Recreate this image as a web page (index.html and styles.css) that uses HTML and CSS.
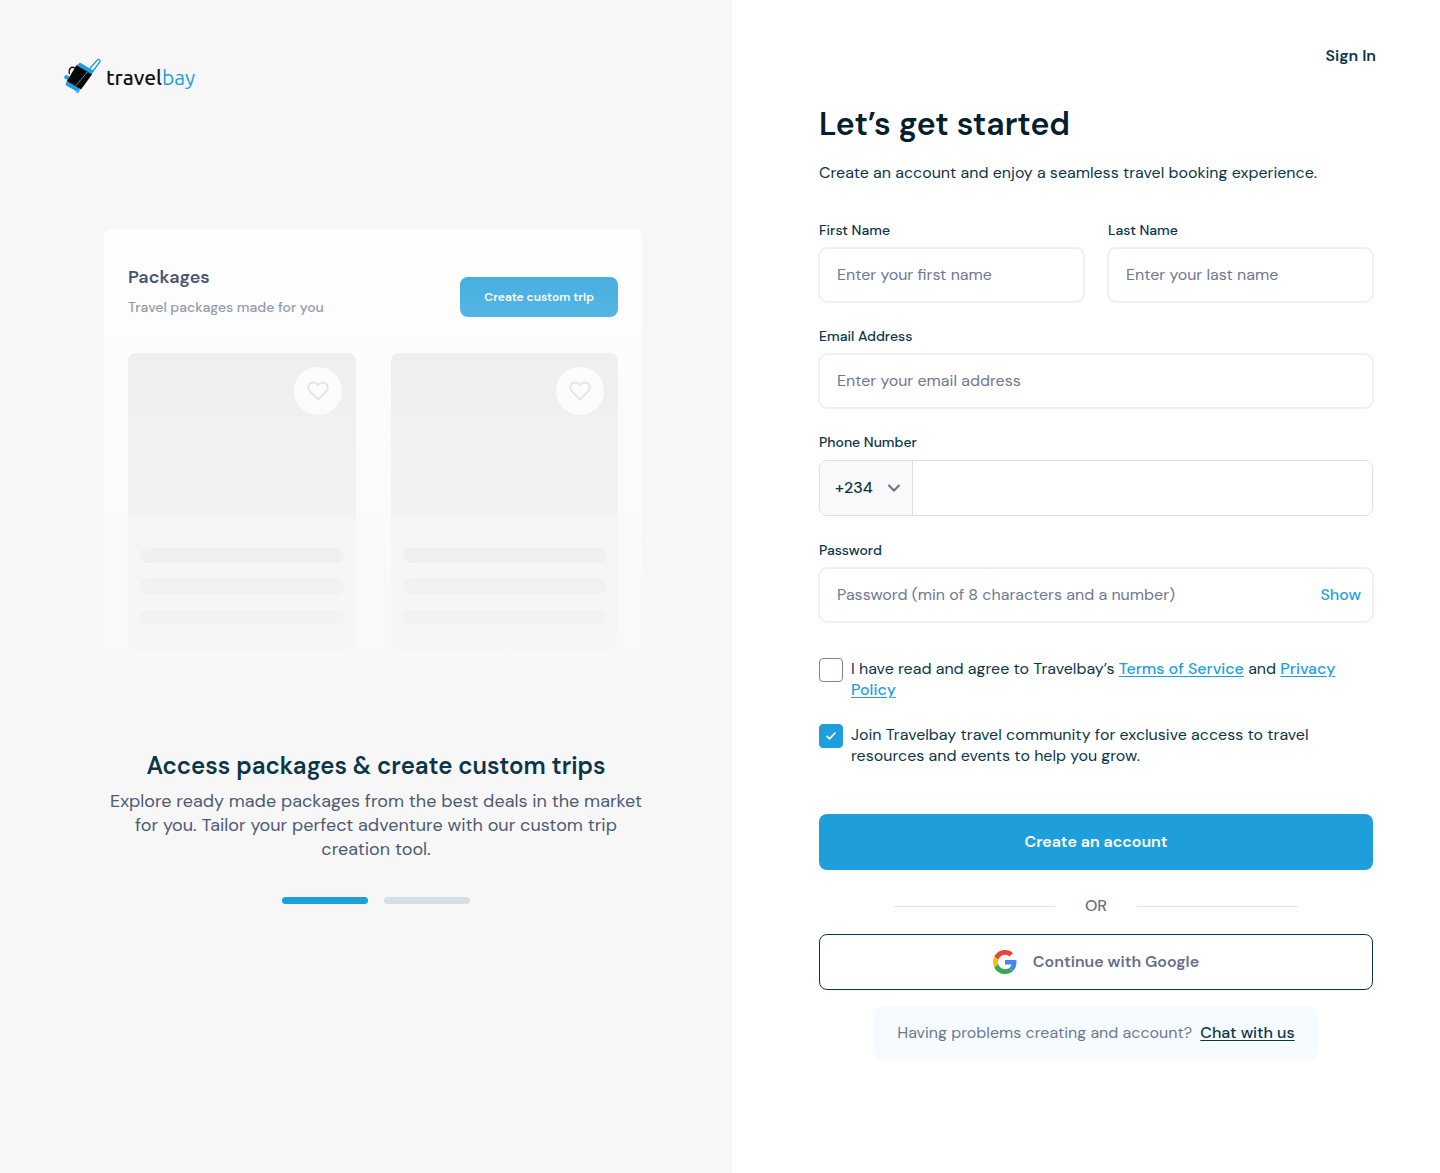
FILE: index.html
```html
<!DOCTYPE html>
<html lang="en">
<head>
<meta charset="utf-8">
<meta name="viewport" content="width=device-width, initial-scale=1">
<title>Travelbay – Create an account</title>
<link rel="stylesheet" href="styles.css">
</head>
<body>
<div class="page">
  <section class="promo">
    <a class="logo" href="#" aria-label="travelbay">
      <svg class="logo-mark" viewBox="0 0 38 36" aria-hidden="true">
        <path d="M24.500 12 L33.500 1.800 Q34.500 .9 35.700 1.900 Q36.600 2.800 35.700 4 L28 14.500" fill="none" stroke="#1e9fdc" stroke-width="1.300"/>
        <path d="M5.500 16 Q4.500 12 6.500 10 Q8.500 8.500 11 10" fill="none" stroke="#111" stroke-width="1.300"/>
        <path d="M13 7 L16 4.500 L30 13 L27.500 17 Z" fill="#1e9fdc"/>
        <path d="M3 22 L15.500 30 L15.500 33 Q14.500 35.500 12.500 34.800 L11 32.500 L1.500 27 Z" fill="#1e9fdc"/>
        <path d="M0 18.800 L2 16.800 L5.500 18.500 L4 22 L.8 20.800 Z" fill="#1e9fdc"/>
        <path d="M12.500 7 L28 16.500 L17 31.500 L3 23 Z" fill="#05070a"/>
        <path d="M23.500 13.800 L11.500 28.200" stroke="#b9c3c9" stroke-width=".8" stroke-dasharray="3 .6"/>
        <circle cx="13" cy="33.200" r=".7" fill="#f7f7f7"/>
      </svg>
      <span class="logo-text">travel<span class="logo-accent">bay</span></span>
    </a>

    <div class="promo-body">
      <div class="preview">
        <div class="preview-head">
          <div>
            <h3 class="preview-title">Packages</h3>
            <p class="preview-sub">Travel packages made for you</p>
          </div>
          <button class="preview-btn" type="button">Create custom trip</button>
        </div>
        <div class="preview-grid">
          <div class="package">
            <div class="package-image">
              <span class="package-like"><svg viewBox="0 0 24 24" aria-hidden="true"><path d="M12 20.500 L3.800 12.300 C1.600 10 1.700 6.600 3.800 4.800 C6.200 2.800 9.800 3.200 12 6 C14.200 3.200 17.800 2.800 20.200 4.800 C22.300 6.600 22.400 10 20.200 12.300 Z"/></svg></span>
            </div>
            <div class="package-lines"><span></span><span></span><span></span></div>
          </div>
          <div class="package">
            <div class="package-image">
              <span class="package-like"><svg viewBox="0 0 24 24" aria-hidden="true"><path d="M12 20.500 L3.800 12.300 C1.600 10 1.700 6.600 3.800 4.800 C6.200 2.800 9.800 3.200 12 6 C14.200 3.200 17.800 2.800 20.200 4.800 C22.300 6.600 22.400 10 20.200 12.300 Z"/></svg></span>
            </div>
            <div class="package-lines"><span></span><span></span><span></span></div>
          </div>
        </div>
      </div>

      <h2 class="promo-title">Access packages &amp; create custom trips</h2>
      <p class="promo-text">Explore ready made packages from the best deals in the market for you. Tailor your perfect adventure with our custom trip creation tool.</p>
      <div class="slides"><span class="slide slide-active"></span><span class="slide"></span></div>
    </div>
  </section>

  <main class="signup">
    <nav class="top"><a class="signin" href="#">Sign In</a></nav>
    <form class="form">
      <h1 class="title">Let’s get started</h1>
      <p class="subtitle">Create an account and enjoy a seamless travel booking experience.</p>

      <div class="fields">
        <div class="names">
          <div class="field">
            <label for="first">First Name</label>
            <input class="input" id="first" type="text" placeholder="Enter your first name">
          </div>
          <div class="field">
            <label for="last">Last Name</label>
            <input class="input" id="last" type="text" placeholder="Enter your last name">
          </div>
        </div>
        <div class="field">
          <label for="email">Email Address</label>
          <input class="input" id="email" type="email" placeholder="Enter your email address">
        </div>
        <div class="field">
          <label for="phone">Phone Number</label>
          <div class="phone">
            <div class="code">
              <select class="code-select" aria-label="Country code"><option>+234</option></select>
              <svg class="chevron" viewBox="0 0 14 8" aria-hidden="true"><path d="M1.500 1 L7 6.500 L12.500 1"/></svg>
            </div>
            <input class="phone-input" id="phone" type="tel">
          </div>
        </div>
        <div class="field">
          <label for="password">Password</label>
          <div class="input password">
            <input class="password-input" id="password" type="password" placeholder="Password (min of 8 characters and a number)">
            <button class="show" type="button">Show</button>
          </div>
        </div>
      </div>

      <div class="checks">
        <div class="check">
          <input class="box" id="terms" type="checkbox">
          <label for="terms">I have read and agree to Travelbay’s <a href="#">Terms of Service</a> and <a href="#">Privacy Policy</a></label>
        </div>
        <div class="check">
          <input class="box" id="join" type="checkbox" checked>
          <label for="join">Join Travelbay travel community for exclusive access to travel resources and events to help you grow.</label>
        </div>
      </div>

      <button class="btn btn-primary" type="submit">Create an account</button>
      <div class="or"><span>OR</span></div>
      <button class="btn btn-google" type="button">
        <svg class="google" viewBox="0 0 48 48" aria-hidden="true">
          <path fill="#ea4335" d="M24 9.500c3.540 0 6.710 1.220 9.210 3.600l6.850-6.850C35.900 2.380 30.470 0 24 0 14.620 0 6.510 5.380 2.560 13.220l7.980 6.190C12.430 13.720 17.740 9.500 24 9.500z"/>
          <path fill="#4285f4" d="M46.980 24.550c0-1.570-.15-3.090-.38-4.550H24v9.020h12.940c-.58 2.960-2.260 5.480-4.780 7.180l7.730 6c4.510-4.180 7.090-10.360 7.090-17.650z"/>
          <path fill="#fbbc05" d="M10.530 28.590c-.48-1.450-.76-2.990-.76-4.590s.27-3.140.76-4.590l-7.980-6.190C.92 16.460 0 20.120 0 24c0 3.880.92 7.540 2.560 10.780l7.970-6.190z"/>
          <path fill="#34a853" d="M24 48c6.480 0 11.930-2.130 15.890-5.810l-7.730-6c-2.150 1.450-4.920 2.300-8.160 2.300-6.260 0-11.570-4.220-13.470-9.910l-7.980 6.190C6.510 42.620 14.620 48 24 48z"/>
        </svg>
        Continue with Google
      </button>
      <p class="help">Having problems creating and account? <a href="#">Chat with us</a></p>
    </form>
  </main>
</div>
</body>
</html>
```
FILE: styles.css
```css
* { box-sizing: border-box; }

body {
  margin: 0;
  background: #fff;
  color: #0b3649;
  font-family: "DM Sans", Inter, "Liberation Sans", sans-serif;
  font-size: 16px;
  line-height: 24px;
}

h1, h2, h3, p { margin: 0; }
button, input, select { font: inherit; color: inherit; }
button { cursor: pointer; }

.page {
  display: grid;
  grid-template-columns: 61fr 59fr;
  min-height: 100vh;
}

/* Left promo panel */
.promo { background: #f7f7f7; }

.logo {
  display: flex;
  gap: 4px;
  height: 36px;
  margin: 58px 64px 0;
  color: #111;
  text-decoration: none;
}
.logo-mark { width: 38px; height: 36px; }
.logo-text {
  font-family: Ubuntu, "Open Sans", sans-serif;
  font-size: 21px;
  line-height: 38px;
  font-weight: 500;
}
.logo-accent { color: #1e9fdc; font-weight: 400; }

.promo-body { padding: 135px 84px 64px 104px; }

.preview {
  position: relative;
  max-width: 538px;
  padding: 36px 24px;
  border-radius: 8px;
  background: #fff;
}
.preview::after {
  content: "";
  position: absolute;
  inset: 0;
  border-radius: 8px;
  background: linear-gradient(rgba(247, 247, 247, .1), rgba(247, 247, 247, .9));
  pointer-events: none;
}
.preview-head {
  display: flex;
  justify-content: space-between;
  align-items: flex-end;
  margin-bottom: 36px;
}
.preview-title { font-size: 18px; font-weight: 600; color: #1d3150; }
.preview-sub {
  margin-top: 8px;
  font-size: 14px;
  line-height: 20px;
  font-weight: 500;
  color: #717c94;
}
.preview-btn {
  height: 40px;
  padding: 0 24px;
  border: 0;
  border-radius: 8px;
  background: #1e9fdc;
  color: #fff;
  font-size: 12px;
  font-weight: 600;
}
.preview-grid {
  display: grid;
  grid-template-columns: 1fr 1fr;
  gap: 35px;
}
.package { border-radius: 8px; background: #f3f3f3; overflow: hidden; }
.package-image {
  display: flex;
  justify-content: flex-end;
  height: 164px;
  padding: 14px;
  background: #ebebeb;
}
.package-like {
  display: grid;
  place-items: center;
  width: 48px;
  height: 48px;
  border-radius: 50%;
  background: #fff;
}
.package-like svg {
  width: 24px;
  height: 24px;
  fill: none;
  stroke: #dadada;
  stroke-width: 2;
}
.package-lines {
  display: grid;
  gap: 16px;
  padding: 31px 12px 26px;
}
.package-lines span { height: 15px; border-radius: 8px; background: #e1e1e1; }

.promo-title {
  margin-top: 63px;
  font-size: 24px;
  line-height: 32px;
  font-weight: 600;
  text-align: center;
}
.promo-text {
  margin-top: 7px;
  font-size: 18px;
  color: #4e5b73;
  text-align: center;
}
.slides {
  display: flex;
  justify-content: center;
  gap: 16px;
  margin-top: 36px;
}
.slide { width: 86px; height: 7px; border-radius: 4px; background: #d3dfe3; }
.slide-active { background: #1e9fdc; }

/* Right sign-up panel */
.top {
  display: flex;
  justify-content: flex-end;
  padding: 44px 64px 0;
}
.signin { color: #0b3649; font-weight: 600; text-decoration: none; }

.form {
  display: flex;
  flex-direction: column;
  padding: 36px 67px 64px 87px;
}
.title { font-size: 32px; line-height: 40px; font-weight: 600; color: #04202d; }
.subtitle { margin-top: 17px; }

.fields { display: grid; gap: 24px; margin-top: 35px; }
.names { display: grid; grid-template-columns: 1fr 1fr; gap: 24px; }
.field { display: grid; gap: 8px; min-width: 0; }
.field label { font-size: 14px; line-height: 20px; font-weight: 500; }

.input {
  width: 100%;
  height: 54px;
  padding: 0 17px 2px;
  border: 1px solid #efefef;
  border-radius: 8px;
  background: #fff;
  box-shadow: 0 0 0 1px #f1f1f1;
}
::placeholder { color: #6e7891; opacity: 1; }

.phone {
  display: flex;
  height: 56px;
  border: 1px solid #dddfe0;
  border-radius: 8px;
  overflow: hidden;
}
.code {
  display: flex;
  align-items: center;
  width: 93px;
  padding: 0 11px 0 15px;
  border-right: 1px solid #dddfe0;
  background: #f9f9f9;
}
.code-select {
  flex: 1;
  min-width: 0;
  padding: 0;
  border: 0;
  background: none;
  font-weight: 500;
  appearance: none;
}
.chevron {
  flex: none;
  width: 14px;
  height: 8px;
  fill: none;
  stroke: #667089;
  stroke-width: 2;
}
.phone-input { flex: 1; min-width: 0; padding: 0 16px; border: 0; background: #fff; }

.password { display: flex; align-items: center; padding: 0 11px 0 17px; }
.password-input { flex: 1; min-width: 0; padding: 0; border: 0; background: none; }
.show {
  padding: 0;
  border: 0;
  background: none;
  color: #1e9fdc;
  font-weight: 500;
}

.checks { display: grid; gap: 24px; margin-top: 36px; line-height: 21px; }
.check { display: flex; gap: 8px; }
.check a { color: #1e9fdc; font-weight: 500; text-underline-offset: 2px; }
.box {
  flex: none;
  width: 24px;
  height: 24px;
  margin: 0;
  border: 1px solid #7c869c;
  border-radius: 4px;
  background: #fff;
  appearance: none;
}
.box:checked {
  display: grid;
  place-items: center;
  border-color: #1e9fdc;
  background: #1e9fdc;
}
.box:checked::before {
  content: "";
  width: 10px;
  height: 8px;
  background: #fff;
  clip-path: polygon(0 55%, 10% 40%, 35% 68%, 90% 0, 100% 12%, 37% 100%);
}

.btn {
  display: flex;
  justify-content: center;
  align-items: center;
  gap: 16px;
  height: 56px;
  border-radius: 8px;
  font-weight: 600;
}
.btn-primary { margin-top: 48px; border: 0; background: #1e9fdc; color: #fff; }
.btn-google { border: 1px solid #0b3649; background: #fff; color: #667089; }
.google { width: 24px; height: 24px; }

.or {
  display: flex;
  align-items: center;
  gap: 30px;
  margin: 24px 75px 16px;
  color: #667089;
  font-weight: 500;
}
.or::before, .or::after { content: ""; flex: 1; height: 1px; background: #e0e2e5; }

.help {
  align-self: center;
  margin-top: 17px;
  padding: 14px 24px;
  border-radius: 8px;
  background: #f5fbff;
  color: #6e7891;
}
.help a {
  margin-left: 4px;
  color: #0b3649;
  font-weight: 500;
  text-underline-offset: 2px;
}
```
